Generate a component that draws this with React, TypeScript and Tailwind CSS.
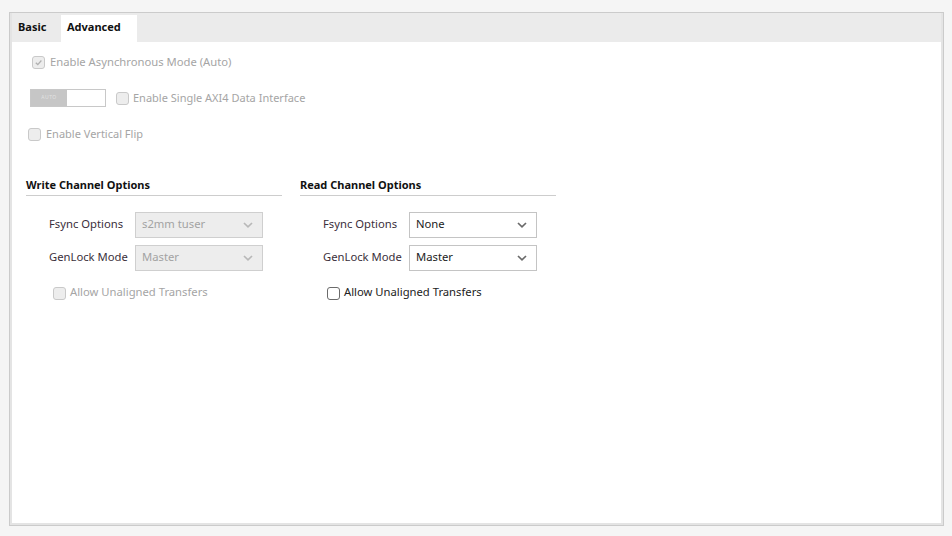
const FONT = { fontFamily: '"Noto Sans", "Open Sans", sans-serif' };

function Check({ checked = false, disabled = false }: { checked?: boolean; disabled?: boolean }) {
  return (
    <span
      className={`flex h-[13px] w-[13px] shrink-0 items-center justify-center rounded-[3px] border ${
        disabled ? 'border-[#c9c9c9] bg-[#ededed]' : 'border-[#6b6b6b] bg-white'
      }`}
    >
      {checked && (
        <svg width="9" height="9" viewBox="0 0 10 10" fill="none">
          <path d="M2 5.2 L4.2 7.3 L8.2 2.8" stroke="#b0b0b0" strokeWidth="1.4" />
        </svg>
      )}
    </span>
  );
}

function Chevron({ color }: { color: string }) {
  return (
    <svg width="10" height="6" viewBox="0 0 10 6" fill="none">
      <path d="M1 1 L5 4.8 L9 1" stroke={color} strokeWidth="1.7" />
    </svg>
  );
}

function Select({ value, disabled = false }: { value: string; disabled?: boolean }) {
  return (
    <div
      className={`flex h-[26px] w-[128px] items-center justify-between border pl-[6px] pr-[9px] pb-[1px] text-[11.25px] ${
        disabled
          ? 'border-[#cfcfcf] bg-[#ededed] text-[#a3a3a3]'
          : 'border-[#c4c4c4] bg-white text-[#222]'
      }`}
    >
      <span>{value}</span>
      <Chevron color={disabled ? '#b8b8b8' : '#6a6a6a'} />
    </div>
  );
}

function ChannelSection({
  title,
  fsync,
  disabled,
}: {
  title: string;
  fsync: string;
  disabled: boolean;
}) {
  return (
    <div className="flex w-[256px] flex-col">
      <div className="flex h-[21px] items-center border-b border-[#cdcdcd] text-[11px] font-bold text-[#111]">
        {title}
      </div>
      <div className="mt-[16px] flex flex-col gap-[7px] pl-[23px]">
        <div className="flex items-center">
          <span className="w-[86px] pb-[1px] text-[11.25px] text-[#3b2f3b]">Fsync Options</span>
          <Select value={fsync} disabled={disabled} />
        </div>
        <div className="flex items-center">
          <span className="w-[86px] pb-[1px] text-[11.25px] text-[#3b2f3b]">GenLock Mode</span>
          <Select value="Master" disabled={disabled} />
        </div>
      </div>
      <div className="mt-[12px] flex h-[20px] items-center gap-[4px] pl-[27px]">
        <Check disabled={disabled} />
        <span className={`pb-[1px] text-[11.25px] ${disabled ? 'text-[#a5a5a5]' : 'text-[#222]'}`}>
          Allow Unaligned Transfers
        </span>
      </div>
    </div>
  );
}

export default function App() {
  return (
    <div className="h-[536px] w-[952px] bg-[#f5f5f5] pl-[9px] pt-[12px]" style={FONT}>
      <div className="flex h-[514px] w-[935px] flex-col border border-[#cbcbcb] bg-[#e4e4e4] px-[2px] pb-[2px]">
        {/* Tabs */}
        <div className="flex h-[29px] shrink-0 items-end bg-[#ebebeb]">
          <div className="flex h-[27px] w-[49px] items-center pb-[2px] pl-[6px] text-[11px] font-bold text-[#111]">
            Basic
          </div>
          <div className="flex h-[27px] w-[76px] items-center bg-white pb-[2px] pl-[6px] text-[11px] font-bold text-[#111]">
            Advanced
          </div>
        </div>

        {/* Content */}
        <div className="flex-1 bg-white pt-[2px]">
          <div className="flex h-9 items-center gap-[5px] pl-[20px]">
            <Check checked disabled />
            <span className="text-[11.25px] text-[#a5a5a5]">Enable Asynchronous Mode (Auto)</span>
          </div>
          <div className="flex h-9 items-center pl-[18px]">
            <div className="flex h-[18px] w-[76px] border border-[#c8c8c8]">
              <div className="flex w-[36px] items-center justify-center bg-[#c6c6c6] text-[5px] tracking-[0.5px] text-[#e2e2e2]">
                AUTO
              </div>
              <div className="flex-1 bg-white" />
            </div>
            <span className="ml-[10px]">
              <Check disabled />
            </span>
            <span className="ml-[4px] text-[11px] text-[#a5a5a5]">Enable Single AXI4 Data Interface</span>
          </div>
          <div className="flex h-9 items-center gap-[5px] pl-[16px]">
            <Check disabled />
            <span className="text-[11px] text-[#a5a5a5]">Enable Vertical Flip</span>
          </div>

          <div className="mt-[23px] flex gap-[18px] pl-[14px]">
            <ChannelSection title="Write Channel Options" fsync="s2mm tuser" disabled />
            <ChannelSection title="Read Channel Options" fsync="None" disabled={false} />
          </div>
        </div>
      </div>
    </div>
  );
}
